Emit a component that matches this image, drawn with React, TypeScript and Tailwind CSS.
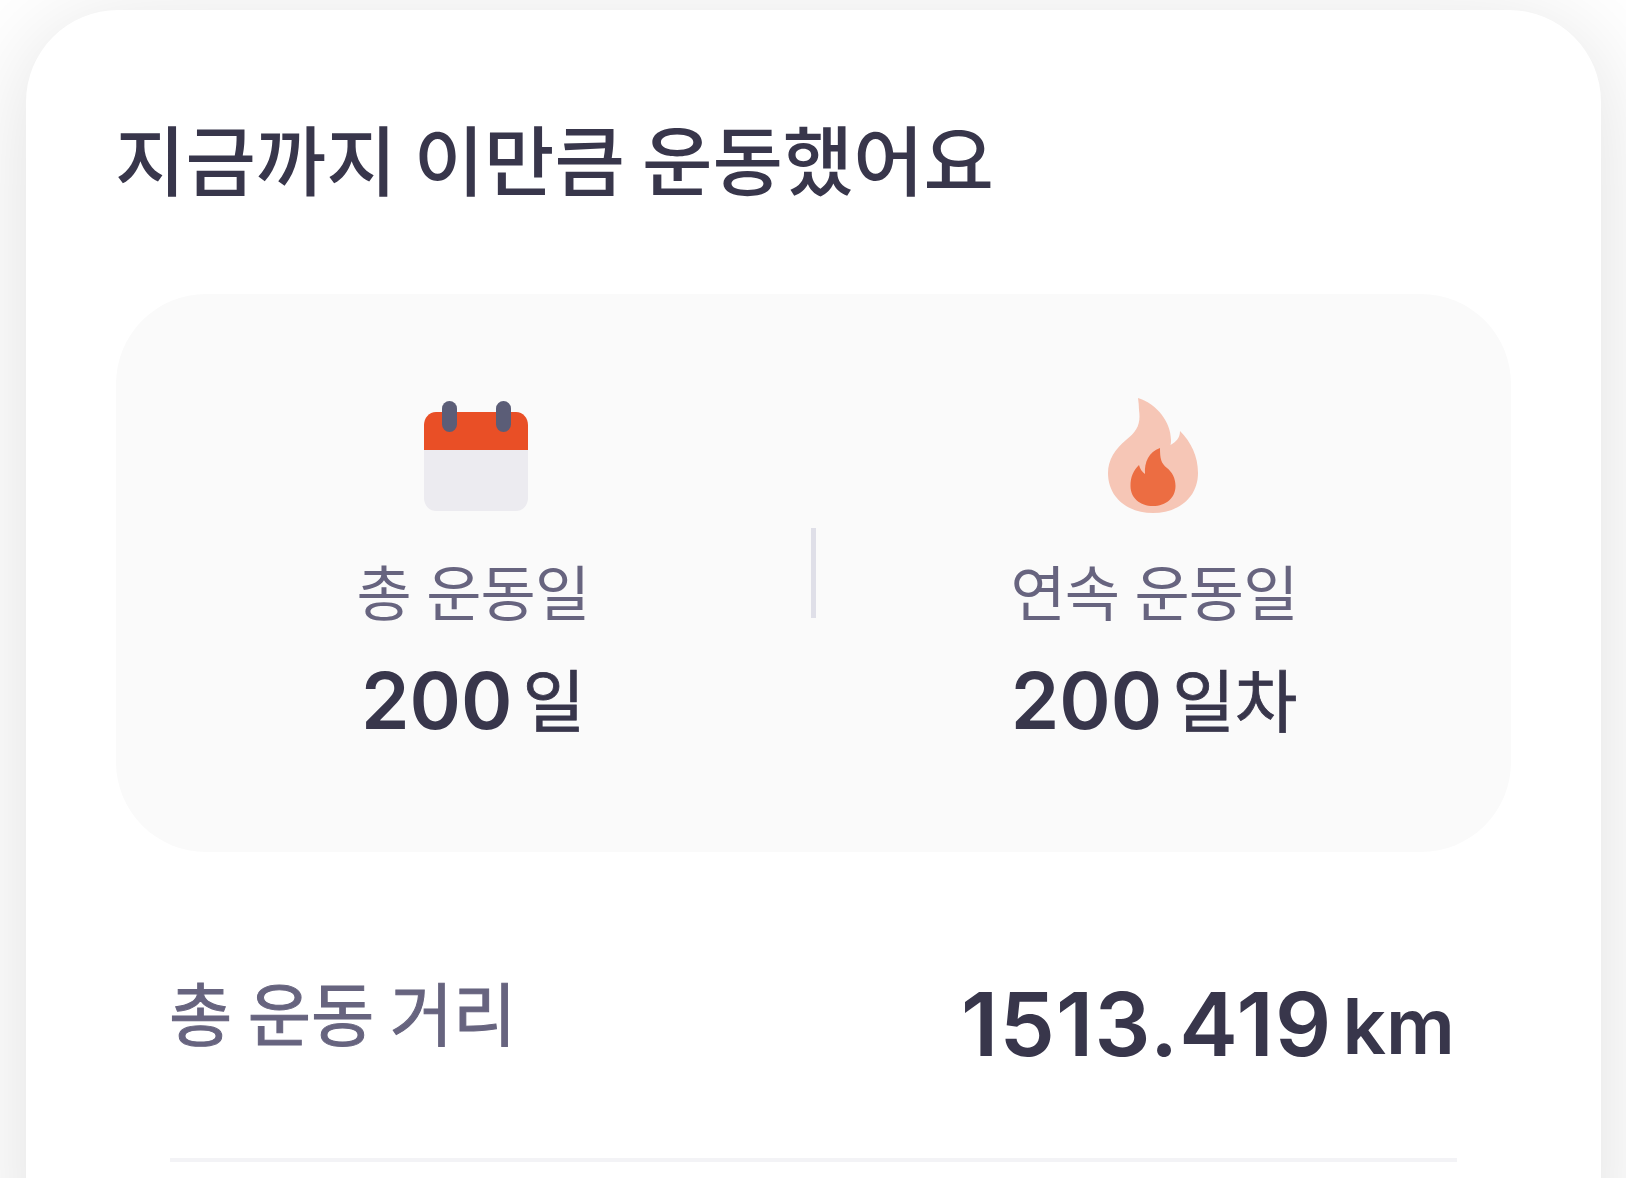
import type { ReactNode } from 'react';

interface StatProps {
    icon: ReactNode;
    label: string;
    value: number;
    unit: string;
}

function CalendarIcon() {
    return (
        <svg className="mt-px ml-[5px]" width="108" height="114" viewBox="0 0 108 114" fill="none">
            <path d="M2 50H106V98C106 105 101 111 94 111H14C7 111 2 105 2 98Z" fill="#ecebf0" />
            <path d="M2 50V25C2 18 7 12 14 12H94C101 12 106 18 106 25V50Z" fill="#e94f26" />
            <rect x="20" y="1" width="15" height="31" rx="7.5" fill="#5b5d77" />
            <rect x="74" y="1" width="15" height="31" rx="7.5" fill="#5b5d77" />
        </svg>
    );
}

function FireIcon() {
    return (
        <svg className="mr-[3px]" width="92" height="116" viewBox="0 0 92 116" fill="none">
            <path
                d="M31 0C50 6 64 24 64 42C64 44 64 45 63.5 47C69 44 73 40 73 33C84 44 91 58 91 75C91 99 72 115 46 115C20 115 1 99 1 75C1 62 8 51 19 42C30 33 34 26 32 12C32 8 31.5 4 31 0Z"
                fill="#f6c6b6"
            />
            <path
                d="M53 50C53 61 54 65 60 70C65 74 68.5 80 68.5 88C68.5 100 59 108 46 108C33 108 23.5 100 23.5 88C23.5 79 26 73 32 67C33 71 35 74 38 76C37 64 42 54 53 50Z"
                fill="#ec6d42"
            />
        </svg>
    );
}

function Stat({ icon, label, value, unit }: StatProps) {
    return (
        <div className="flex w-[676px] flex-col items-center pt-[102px]">
            <div className="flex h-[120px] items-center">{icon}</div>
            <p className="mt-[34px] text-[60px] leading-[80px] tracking-[-0.8px] text-[#67647f] [word-spacing:2.6px]">{label}</p>
            <p className="mt-[26px] flex items-baseline gap-[10px] leading-[88px] text-[#38364b]">
                <span className="font-['Inter'] text-[78px] font-semibold">{value}</span>
                <span className="relative -top-[2px] text-[68px] [-webkit-text-stroke:0.8px]">{unit}</span>
            </p>
        </div>
    );
}

export default function App() {
    return (
        <div className="h-[1178px] overflow-hidden bg-white pt-[10px] pr-[25px] pl-[26px] font-['Noto_Sans_CJK_KR',sans-serif]">
            <main className="h-[1300px] rounded-[92px] bg-white px-[90px] pt-[97px] shadow-[0_16px_100px_rgba(0,0,0,0.13)]">
                <h1 className="-ml-px text-[76.5px] leading-[100px] font-medium text-[#38364b]">지금까지 이만큼 운동했어요</h1>

                <section className="mt-[87px] flex h-[558px] justify-center rounded-[90px] bg-[#fafafa]">
                    <Stat icon={<CalendarIcon />} label="총 운동일" value={200} unit="일" />
                    <div className="h-[90px] w-[5px] self-center bg-[#dfdfe8]" />
                    <Stat icon={<FireIcon />} label="연속 운동일" value={200} unit="일차" />
                </section>

                <div className="mx-[54px] mt-[109px] flex h-[201px] justify-between border-b-4 border-[#f3f3f6]">
                    <span className="-ml-px pt-[5px] text-[68.8px] leading-[90px] text-[#67647f] [-webkit-text-stroke:1px]">총 운동 거리</span>
                    <span className="mr-[2px] flex items-baseline gap-[10px] pt-[3px] font-['Inter'] leading-[120px] font-semibold text-[#38364b]">
                        <span className="text-[88px] tracking-[1.3px]">1513.419</span>
                        <span className="relative -top-[2px] text-[76.5px]">km</span>
                    </span>
                </div>
            </main>
        </div>
    );
}
